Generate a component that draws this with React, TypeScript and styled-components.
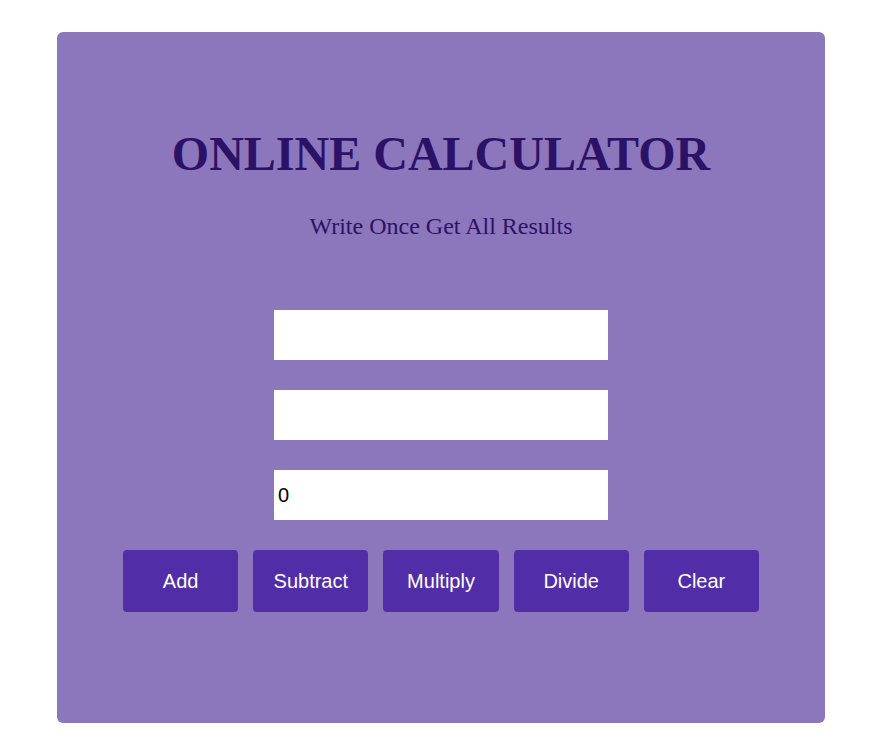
import { useState } from 'react';
import styled, { createGlobalStyle } from 'styled-components';

const GlobalStyle = createGlobalStyle`
  body {
    margin: 0;
    background: #ffffff;
  }
`;

const OPERATIONS = ['Add', 'Subtract', 'Multiply', 'Divide', 'Clear'];

export default function App() {
  const [first, setFirst] = useState('');
  const [second, setSecond] = useState('');
  const [result, setResult] = useState('0');

  const run = (op: string) => {
    const a = parseFloat(first) || 0;
    const b = parseFloat(second) || 0;
    if (op === 'Add') setResult(String(a + b));
    if (op === 'Subtract') setResult(String(a - b));
    if (op === 'Multiply') setResult(String(a * b));
    if (op === 'Divide') setResult(String(b === 0 ? 0 : a / b));
    if (op === 'Clear') {
      setFirst('');
      setSecond('');
      setResult('0');
    }
  };

  return (
    <Page>
      <GlobalStyle />
      <Card>
        <Title>ONLINE CALCULATOR</Title>
        <Subtitle>Write Once Get All Results</Subtitle>

        <Fields>
          <Field value={first} onChange={(e) => setFirst(e.target.value)} />
          <Field value={second} onChange={(e) => setSecond(e.target.value)} />
          <Field value={result} readOnly />
        </Fields>

        <Buttons>
          {OPERATIONS.map((op) => (
            <Button key={op} onClick={() => run(op)}>
              {op}
            </Button>
          ))}
        </Buttons>
      </Card>
    </Page>
  );
}

const Page = styled.div`
  padding: 32px 0 27px 57px;
`;

const Card = styled.div`
  width: 768px;
  height: 691px;
  box-sizing: border-box;
  padding-top: 94px;
  display: flex;
  flex-direction: column;
  align-items: center;
  background-color: #8c76bc;
  border-radius: 6px;
`;

const Title = styled.h1`
  margin: 0;
  font-family: 'Liberation Serif', 'Times New Roman', serif;
  font-size: 48px;
  line-height: 56px;
  font-weight: bold;
  color: #2c1267;
`;

const Subtitle = styled.p`
  margin: 30px 0 0;
  font-family: 'Liberation Serif', 'Times New Roman', serif;
  font-size: 24px;
  line-height: 28px;
  color: #2c1267;
`;

const Fields = styled.div`
  margin-top: 70px;
  display: flex;
  flex-direction: column;
  gap: 30px;
`;

const Field = styled.input`
  width: 334px;
  height: 50px;
  box-sizing: border-box;
  padding: 0 4px;
  border: none;
  outline: none;
  background: #ffffff;
  font-family: 'Liberation Sans', Arial, sans-serif;
  font-size: 20px;
  color: #000000;
`;

const Buttons = styled.div`
  margin-top: 30px;
  display: flex;
  gap: 15px;
`;

const Button = styled.button`
  width: 115.2px;
  height: 62px;
  border: none;
  border-radius: 4px;
  background-color: #512da8;
  color: #ffffff;
  font-family: 'Liberation Sans', Arial, sans-serif;
  font-size: 20px;
  cursor: pointer;
`;
